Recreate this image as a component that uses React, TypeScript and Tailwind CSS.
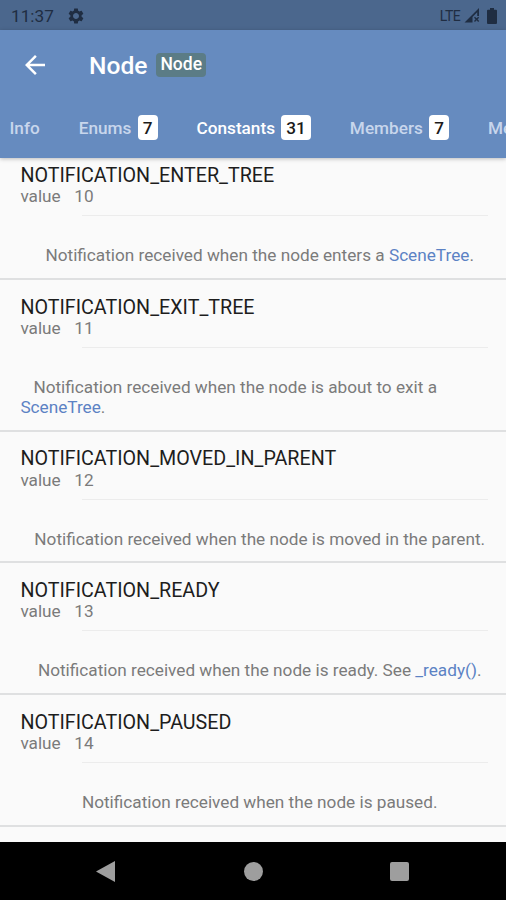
import type { ReactNode } from "react";

const tabs = [
  { label: "Info" },
  { label: "Enums", count: 7 },
  { label: "Constants", count: 31, active: true },
  { label: "Members", count: 7 },
  { label: "Methods", count: 58 },
];

const constants: { name: string; value: number; description: ReactNode }[] = [
  {
    name: "NOTIFICATION_ENTER_TREE",
    value: 10,
    description: (
      <>
        Notification received when the node enters a <Link>SceneTree</Link>.
      </>
    ),
  },
  {
    name: "NOTIFICATION_EXIT_TREE",
    value: 11,
    description: (
      <>
        Notification received when the node is about to exit a <Link>SceneTree</Link>.
      </>
    ),
  },
  {
    name: "NOTIFICATION_MOVED_IN_PARENT",
    value: 12,
    description: "Notification received when the node is moved in the parent.",
  },
  {
    name: "NOTIFICATION_READY",
    value: 13,
    description: (
      <>
        Notification received when the node is ready. See <Link>_ready()</Link>.
      </>
    ),
  },
  {
    name: "NOTIFICATION_PAUSED",
    value: 14,
    description: "Notification received when the node is paused.",
  },
];

function Link({ children }: { children: ReactNode }) {
  return <span className="text-[#5c82c4]">{children}</span>;
}

function StatusBar() {
  return (
    <div className="flex h-[30px] shrink-0 items-center bg-[#4b678d] pt-px pr-[8px] pl-[11px] text-[#1f2d42]">
      <span className="text-[17.2px] leading-5">11:37</span>
      <svg className="ml-[13px] h-[18px] w-[18px]" viewBox="0 0 24 24" fill="currentColor">
        <path d="M19.43 12.98c.04-.32.07-.64.07-.98s-.03-.66-.07-.98l2.11-1.65c.19-.15.24-.42.12-.64l-2-3.46c-.12-.22-.39-.3-.61-.22l-2.49 1c-.52-.4-1.08-.73-1.69-.98l-.38-2.65C14.46 2.18 14.25 2 14 2h-4c-.25 0-.46.18-.49.42l-.38 2.65c-.61.25-1.17.59-1.69.98l-2.49-1c-.23-.09-.49 0-.61.22l-2 3.46c-.13.22-.07.49.12.64l2.11 1.65c-.04.32-.07.65-.07.98s.03.66.07.98l-2.11 1.65c-.19.15-.24.42-.12.64l2 3.46c.12.22.39.3.61.22l2.49-1c.52.4 1.08.73 1.69.98l.38 2.65c.03.24.24.42.49.42h4c.25 0 .46-.18.49-.42l.38-2.65c.61-.25 1.17-.59 1.69-.98l2.49 1c.23.09.49 0 .61-.22l2-3.46c.12-.22.07-.49-.12-.64l-2.11-1.65zM12 16c-2.210 0-4-1.790-4-4s1.790-4 4-4 4 1.790 4 4-1.790 4-4 4z" />
      </svg>
      <span className="ml-auto text-[14px] leading-5 tracking-[-0.6px]">LTE</span>
      <svg className="ml-[4px] h-[15px] w-[16px]" viewBox="0 0 16 15" fill="currentColor">
        <path d="M15 0v8h-1.800V4.200L8.500 9v5.500H0.500z" />
        <path d="M10 9.700l1-1 1.600 1.600 1.600-1.600 1 1-1.600 1.600 1.600 1.600-1 1-1.600-1.600-1.600 1.600-1-1 1.600-1.600z" />
      </svg>
      <svg className="ml-[6px] h-[16px] w-[12px]" viewBox="0 0 12 16" fill="currentColor">
        <path d="M4 0h4v1.800h2a1 1 0 0 1 1 1V15a1 1 0 0 1-1 1H2a1 1 0 0 1-1-1V2.800a1 1 0 0 1 1-1h2z" />
      </svg>
    </div>
  );
}

function AppBar() {
  return (
    <header className="relative z-10 h-[127.500px] shrink-0 bg-[#668bbf] font-medium text-white shadow-[0_1px_4px_rgba(0,0,0,0.25)]">
      <div className="flex h-[69px] items-center pl-[20px]">
        <svg className="h-[30px] w-[30px]" viewBox="0 0 24 24" fill="currentColor">
          <path d="M20 11H7.830l5.590-5.590L12 4l-8 8 8 8 1.410-1.410L7.830 13H20v-2z" />
        </svg>
        <h1 className="ml-[39px] pt-[2px] text-[24.6px] leading-7">Node</h1>
        <span className="ml-[9px] h-[24px] rounded-[4px] bg-[#5b7c86] px-[4px] text-[17.5px] leading-[23px]">
          Node
        </span>
      </div>
      <nav className="flex h-[58px] items-center gap-[39px] overflow-hidden pl-[9.500px] text-[17.2px]">
        {tabs.map((tab) => (
          <div key={tab.label} className="flex shrink-0 items-center gap-[6.300px]">
            <span className={tab.active ? "pt-px text-white" : "pt-px text-[#c8d6ec]"}>{tab.label}</span>
            {tab.count && (
              <span className="h-[25px] rounded-[4px] bg-white px-[5px] leading-[26px] text-[#1c1c1c]">
                {tab.count}
              </span>
            )}
          </div>
        ))}
      </nav>
    </header>
  );
}

function ConstantItem({ name, value, description }: (typeof constants)[number]) {
  return (
    <li className="border-b-2 border-[#dfe0e1] pr-[18px] pb-[12.7px] pl-[20.400px]">
      <h2 className="pt-[16.600px] text-[19.7px] leading-[22px] text-[#1d1d1d]">{name}</h2>
      <p className="-mt-[0.600px] text-[17.2px] leading-[20px] text-[#7b7b7b]">
        value<span className="ml-[13.500px]">{value}</span>
      </p>
      <div className="mt-[9px] ml-[61.600px] h-px bg-[#ececec]" />
      <div className="flex justify-center pt-[29px] pr-[2px]">
        <p className="indent-[13px] text-[17.2px] leading-[20px] text-[#7b7b7b]">{description}</p>
      </div>
    </li>
  );
}

function NavigationBar() {
  return (
    <div className="flex h-[58px] shrink-0 items-center justify-between bg-black pr-[97px] pl-[96px] text-[#9e9e9e]">
      <svg className="h-[21px] w-[19px]" viewBox="0 0 19 21" fill="currentColor">
        <path d="M19 0v21L0 10.500z" />
      </svg>
      <div className="ml-px h-[19px] w-[19px] rounded-full bg-current" />
      <div className="h-[19px] w-[19px] rounded-[2px] bg-current" />
    </div>
  );
}

export default function App() {
  return (
    <div className="flex h-[900px] w-[506px] flex-col overflow-hidden bg-[#fafafa] font-[Roboto,sans-serif]">
      <StatusBar />
      <AppBar />
      <main className="min-h-0 flex-1 overflow-hidden">
        <ul className="-mt-[9.200px]">
          {constants.map((constant) => (
            <ConstantItem key={constant.name} {...constant} />
          ))}
        </ul>
      </main>
      <NavigationBar />
    </div>
  );
}
